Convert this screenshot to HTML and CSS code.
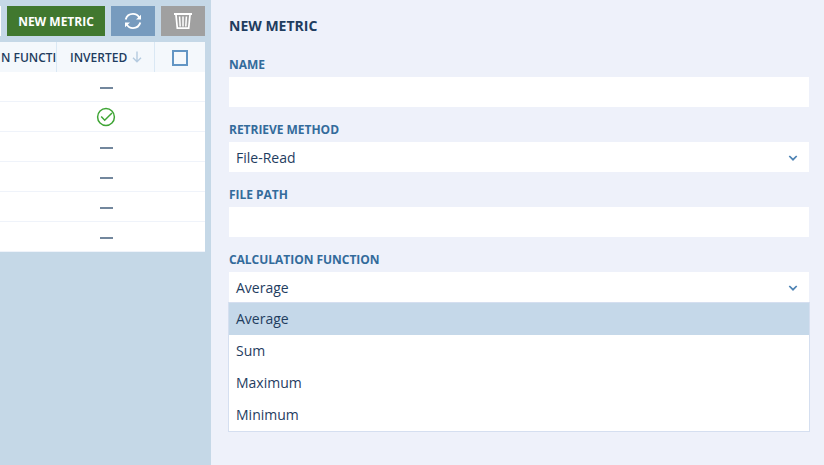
FILE: index.html
```html
<!DOCTYPE html>
<html lang="en">
<head>
<meta charset="utf-8">
<title>Metrics</title>
<link rel="stylesheet" href="styles.css">
</head>
<body>
<main class="app">
  <section class="list">
    <div class="toolbar">
      <span class="search-end"></span>
      <button class="btn btn-new">NEW METRIC</button>
      <button class="btn btn-refresh" aria-label="Refresh">
        <svg width="18" height="18" viewBox="0 0 18 18" fill="none" stroke="#fff" stroke-width="1.900">
          <path d="M1.700 7.400C2.600 4.100 5.400 1.900 9 1.900c2.700 0 5 1.400 6.300 3.700M16.300 10.600c-.9 3.300-3.700 5.500-7.300 5.500-2.700 0-5-1.400-6.300-3.700"/>
          <path d="M17 2.800v4.700h-5zM1 15.200v-4.700h5z" fill="#fff" stroke="none"/>
        </svg>
      </button>
      <button class="btn btn-delete" aria-label="Delete">
        <svg width="18" height="18" viewBox="0 0 18 18" fill="none" stroke="#fff">
          <path d="M0 2h18" stroke-width="2"/>
          <path d="M2 3l1.300 13.200h11.400L16 3" stroke-width="1.700"/>
          <path d="M5.600 4.500l.6 10M9 4.500v10M12.400 4.500l-.6 10" stroke-width="1.500"/>
        </svg>
      </button>
    </div>
    <div class="table">
      <div class="row head">
        <div class="cell fn">N FUNCTI</div>
        <div class="cell inv">INVERTED
          <svg class="sort" width="10" height="12" viewBox="0 0 10 12" fill="none" stroke="#b5cbe0" stroke-width="1.400"><path d="M5 .5v10M1 6.800l4 4 4-4"/></svg>
        </div>
        <div class="cell sel"><span class="checkbox"></span></div>
      </div>
      <div class="row"><span class="dash"></span></div>
      <div class="row">
        <svg class="check" width="20" height="20" viewBox="0 0 20 20" fill="none" stroke="#3fa535" stroke-width="1.500"><circle cx="10" cy="10" r="8.400"/><path d="M5.200 9.600l3.500 3.600L16 6"/></svg>
      </div>
      <div class="row"><span class="dash"></span></div>
      <div class="row"><span class="dash"></span></div>
      <div class="row"><span class="dash"></span></div>
      <div class="row"><span class="dash"></span></div>
    </div>
  </section>
  <section class="editor">
    <h1 class="title">NEW METRIC</h1>
    <div class="field">
      <div class="label">NAME</div>
      <div class="input"></div>
    </div>
    <div class="field">
      <div class="label">RETRIEVE METHOD</div>
      <div class="input">File-Read
        <svg class="chevron" width="10" height="8" viewBox="0 0 10 8" fill="none" stroke="#4d82b3" stroke-width="1.700"><path d="M1.300 2L5 5.700 8.700 2"/></svg>
      </div>
    </div>
    <div class="field">
      <div class="label">FILE PATH</div>
      <div class="input"></div>
    </div>
    <div class="field">
      <div class="label">CALCULATION FUNCTION</div>
      <div class="input">Average
        <svg class="chevron" width="10" height="8" viewBox="0 0 10 8" fill="none" stroke="#4d82b3" stroke-width="1.700"><path d="M1.300 2L5 5.700 8.700 2"/></svg>
      </div>
      <div class="menu">
        <div class="option active">Average</div>
        <div class="option">Sum</div>
        <div class="option">Maximum</div>
        <div class="option">Minimum</div>
      </div>
    </div>
  </section>
</main>
</body>
</html>
```
FILE: styles.css
```css
* { box-sizing: border-box; }
body {
  margin: 0;
  font-family: "Open Sans", sans-serif;
  color: #1f3d5f;
}
.app { display: flex; height: 465px; overflow: hidden; }
.list { width: 211px; flex: none; padding-top: 6px; background: #c5d8e7; }
.toolbar { display: flex; gap: 6px; height: 30px; margin-bottom: 6px; }
.search-end { width: 1px; background: #fff; }
.btn {
  display: flex;
  align-items: center;
  justify-content: center;
  width: 44px;
  padding: 0;
  border: 0;
  color: #fff;
  font: 700 12px "Open Sans", sans-serif;
}
.btn-new { width: 98px; background: #41782f; }
.btn-refresh { background: #779bbe; }
.btn-delete { background: #a0a0a0; }
.table { width: 205px; background: #fff; }
.row {
  display: flex;
  align-items: center;
  height: 30px;
  padding-left: 100px;
  border-bottom: 1px solid #eff3fa;
}
.head {
  padding: 0;
  border: 0;
  background: #f4f8fc;
  font-size: 12px;
  font-weight: 600;
}
.cell { display: flex; align-items: center; height: 30px; }
.fn { width: 57px; padding-left: 1px; border-right: 1px solid #dae8f4; white-space: nowrap; overflow: hidden; }
.inv { width: 98px; padding-left: 13px; gap: 5px; border-right: 1px solid #dae8f4; }
.sort { margin-top: -1px; }
.sel { flex: 1; justify-content: center; }
.checkbox { width: 16px; height: 16px; margin-top: 2px; border: 2px solid #6295c4; }
.dash { width: 13px; height: 2px; margin: 3px 0 0 -.5px; background: #73879d; }
.check { margin-left: -4px; }
.editor { flex: 1; padding: 16px 15px 0 18px; background: #eef1fa; }
.title { margin: 0 0 18px; font-size: 14px; line-height: 20px; font-weight: 700; }
.field { position: relative; margin-bottom: 12px; }
.label { height: 23px; color: #336b9b; font-size: 12px; line-height: 22px; font-weight: 700; letter-spacing: -.03px; }
.input {
  display: flex;
  align-items: center;
  justify-content: space-between;
  height: 30px;
  padding: 0 11px 0 7px;
  background: #fff;
  font-size: 14px;
}
.chevron { margin-top: 2px; }
.menu {
  position: absolute;
  top: 53px;
  left: -1px;
  right: -1px;
  border: 1px solid #d5dff0;
  background: #fff;
}
.option { height: 32px; padding-left: 7px; font-size: 14px; line-height: 32px; }
.active { background: #c5d8e9; }
```
